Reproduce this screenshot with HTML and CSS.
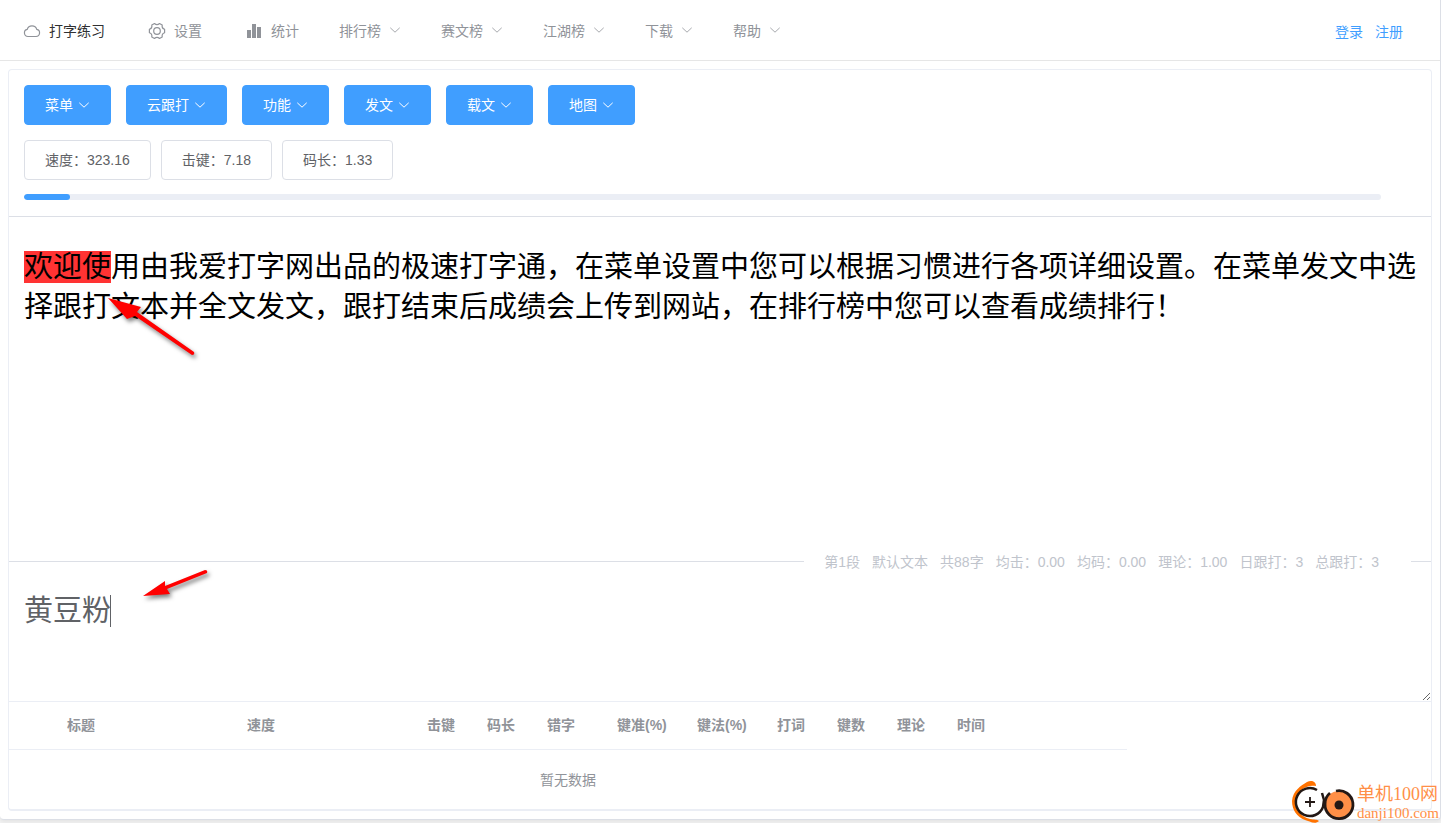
FILE: index.html
```html
<!DOCTYPE html>
<html lang="zh-CN">
<head>
<meta charset="utf-8">
<meta name="viewport" content="width=device-width, initial-scale=1">
<title>打字练习</title>
<link rel="stylesheet" href="styles.css">
</head>
<body>
<svg class="defs" aria-hidden="true">
  <symbol id="chevron" viewBox="0 0 12 12"><path d="M1.3 3.8 6 8.2l4.7-4.4" fill="none" stroke="currentColor"/></symbol>
</svg>
<div class="page">
  <header class="topbar">
    <nav class="nav">
      <a class="nav-item active" href="#">
        <svg class="nav-icon" viewBox="0 0 24 24"><path d="M8 17.500a3.600 3.600 0 0 1-.8-7.100A5 5 0 0 1 16.800 10.400a3.600 3.600 0 0 1-.8 7.100z" fill="none" stroke="currentColor" stroke-width="1.200"/></svg>
        <span>打字练习</span>
      </a>
      <a class="nav-item" href="#">
        <svg class="nav-icon" viewBox="0 0 24 24"><g fill="none" stroke="currentColor" stroke-width="1.200" stroke-linejoin="round"><path d="M9.500 4.500Q12 6.800 14.500 4.500L17.200 6Q16.600 9.300 19.600 10.300V13.700Q16.600 14.700 17.200 18L14.500 19.500Q12 17.200 9.500 19.500L6.800 18Q7.400 14.700 4.400 13.700V10.300Q7.400 9.300 6.800 6Z"/><circle cx="12" cy="12" r="3.300"/></g></svg>
        <span>设置</span>
      </a>
      <a class="nav-item" href="#">
        <svg class="nav-icon" viewBox="0 0 24 24"><path d="M5 11h4v8H5zM10 5h4v14h-4zM15 8h4v11h-4z" fill="currentColor"/></svg>
        <span>统计</span>
      </a>
      <a class="nav-item" href="#"><span>排行榜</span><svg class="nav-arrow"><use href="#chevron"/></svg></a>
      <a class="nav-item" href="#"><span>赛文榜</span><svg class="nav-arrow"><use href="#chevron"/></svg></a>
      <a class="nav-item" href="#"><span>江湖榜</span><svg class="nav-arrow"><use href="#chevron"/></svg></a>
      <a class="nav-item" href="#"><span>下载</span><svg class="nav-arrow"><use href="#chevron"/></svg></a>
      <a class="nav-item" href="#"><span>帮助</span><svg class="nav-arrow"><use href="#chevron"/></svg></a>
    </nav>
    <div class="account"><a href="#">登录</a><a href="#">注册</a></div>
  </header>

  <main class="panel">
    <section class="controls">
      <div class="menus">
        <button class="btn primary" type="button">菜单<svg><use href="#chevron"/></svg></button>
        <button class="btn primary" type="button">云跟打<svg><use href="#chevron"/></svg></button>
        <button class="btn primary" type="button">功能<svg><use href="#chevron"/></svg></button>
        <button class="btn primary" type="button">发文<svg><use href="#chevron"/></svg></button>
        <button class="btn primary" type="button">载文<svg><use href="#chevron"/></svg></button>
        <button class="btn primary" type="button">地图<svg><use href="#chevron"/></svg></button>
      </div>
      <div class="stats">
        <button class="btn" type="button">速度：323.16</button>
        <button class="btn" type="button">击键：7.18</button>
        <button class="btn" type="button">码长：1.33</button>
      </div>
      <div class="progress" role="progressbar" aria-label="进度" aria-valuenow="3" aria-valuemin="0" aria-valuemax="88"><div class="progress-bar" style="width:3.4%"></div></div>
    </section>

    <section class="article">
      <p><mark>欢迎使</mark>用由我爱打字网出品的极速打字通，在菜单设置中您可以根据习惯进行各项详细设置。在菜单发文中选择跟打文本并全文发文，跟打结束后成绩会上传到网站，在排行榜中您可以查看成绩排行！</p>
      <svg class="arrow arrow-text" viewBox="0 0 100 70" aria-hidden="true"><path d="M7 5 40 14l-4 5 57 40q1 3-2 3L34 23l-8 3z"/></svg>
    </section>

    <div class="divider">
      <div class="summary">
        <span>第1段</span><span>默认文本</span><span>共88字</span><span>均击：0.00</span><span>均码：0.00</span><span>理论：1.00</span><span>日跟打：3</span><span>总跟打：3</span>
      </div>
    </div>

    <section class="typing">
      <textarea aria-label="跟打输入" spellcheck="false">黄豆粉</textarea>
      <span class="caret" aria-hidden="true"></span>
      <svg class="arrow arrow-input" viewBox="0 0 80 40" aria-hidden="true"><path d="M4 30 26 15l0 5 40-16q3 0 2 3L28 23l3 5z"/></svg>
    </section>

    <table class="results">
      <colgroup><col class="c48"><col class="c180"><col class="c180"><col class="c60"><col class="c60"><col class="c70"><col class="c80"><col class="c80"><col class="c60"><col class="c60"><col class="c60"><col class="c180"></colgroup>
      <thead><tr><th></th><th>标题</th><th>速度</th><th>击键</th><th>码长</th><th>错字</th><th>键准(%)</th><th>键法(%)</th><th>打词</th><th>键数</th><th>理论</th><th>时间</th></tr></thead>
      <tbody><tr><td colspan="12">暂无数据</td></tr></tbody>
    </table>
  </main>
</div>

<div class="brand">
  <svg viewBox="0 0 66 44" aria-hidden="true">
    <path d="M25 6C15 4 6 11 5 21c0 9 5 16 14 18 4 1 7 0 9 2-4 4-10 0-14-1C6 37 1 30 1 21 2 10 10 6 16 2c4-2 9-1 9 4z" fill="#ff7200"/>
    <circle cx="19" cy="22" r="14" fill="#fff"/>
    <path d="M26 10A14 14 0 1 0 32 27L33 20 31 13" fill="none" stroke="#231815" stroke-width="2.500"/>
    <circle cx="48" cy="25" r="14" fill="#ff8f47"/>
    <path d="M45 11A14 14 0 1 1 34 24Q34 17 39 13" fill="none" stroke="#231815" stroke-width="2.800"/>
    <circle cx="48" cy="25" r="4.500" fill="#231815"/>
    <path d="M19 17v10M14 22h10" stroke="#231815" stroke-width="1.800"/>
  </svg>
  <div class="brand-text"><span class="brand-name">单机100网</span><span class="brand-url">danji100.com</span></div>
</div>
</body>
</html>
```

FILE: styles.css
```css
* { box-sizing: border-box; }
body {
  margin: 0;
  background: #f2f2f2;
  color: #606266;
  font: 14px/20px "Liberation Sans", "Noto Sans CJK SC", sans-serif;
}
a { color: inherit; text-decoration: none; }
.defs { position: absolute; width: 0; height: 0; }
.page {
  background: #fff;
  border: 1px solid #dcdfe6;
  border-width: 0 1px 1px 0;
  border-radius: 0 0 4px 4px;
  padding-bottom: 8px;
  margin-bottom: 3px;
  box-shadow: 0 2px 4px rgba(0, 0, 0, .06);
}
.topbar {
  display: flex;
  justify-content: space-between;
  height: 61px;
  padding-top: 2px;
  border-bottom: 1px solid #e6e6e6;
}
.nav { display: flex; }
.nav-item {
  display: flex;
  align-items: center;
  padding: 0 20px;
  color: #909399;
}
.nav-item.active span { color: #303133; }
.nav-icon { width: 24px; height: 24px; margin-right: 5px; }
.nav-arrow { width: 12px; height: 12px; margin: 0 0 2px 8px; stroke-width: .8; }
.account {
  display: flex;
  align-items: center;
  gap: 12px;
  padding: 2px 37px 0 0;
  color: #409eff;
}
.panel {
  margin: 8px 8px 0;
  border: 1px solid #ebeef5;
  border-bottom-width: 2px;
  border-radius: 4px;
}
.controls { padding: 15px 15px 16px; border-bottom: 1px solid #dcdfe6; }
.menus { display: flex; gap: 15px; }
.stats { display: flex; gap: 10px; margin: 15px 0 14px; }
.btn {
  display: flex;
  align-items: center;
  height: 40px;
  padding: 0 20px;
  border: 1px solid #dcdfe6;
  border-radius: 4px;
  background: #fff;
  color: #606266;
  font: inherit;
}
.btn.primary { background: #409eff; border-color: #409eff; color: #fff; }
.btn svg { width: 12px; height: 12px; margin-left: 5px; }
.progress {
  height: 6px;
  margin-right: 35px;
  border-radius: 3px;
  background: #ebeef5;
  overflow: hidden;
}
.progress-bar { height: 6px; border-radius: 3px; background: #409eff; }
.article {
  position: relative;
  min-height: 334px;
  padding: 30px 8px 30px 15px;
  color: #000;
  font-size: 29px;
  line-height: 40px;
}
.article p { margin: 0; }
mark {
  color: inherit;
  background: linear-gradient(#ff3333, #ff3333) top / 100% 32px no-repeat;
}
.arrow { position: absolute; fill: #f00; filter: drop-shadow(2px 3px 2px rgba(0, 0, 0, .5)); }
.arrow-text { left: 92px; top: 76px; width: 100px; height: 70px; }
.arrow-input { left: 130px; top: -5px; width: 80px; height: 40px; }
.divider { display: flex; align-items: center; height: 20px; }
.divider::before { content: ""; flex: 1; height: 1px; background: #dcdfe6; }
.divider::after { content: ""; width: 20px; height: 1px; background: #dcdfe6; }
.summary { display: flex; gap: 12px; padding: 1px 32px 0 20px; color: #c0c4cc; }
.typing { position: relative; border-bottom: 1px solid #ebeef5; }
.typing textarea {
  display: block;
  width: 100%;
  height: 130px;
  padding: 20px 15px;
  border: 0;
  outline: 0;
  resize: vertical;
  background: transparent;
  color: #606266;
  font: inherit;
  font-size: 29px;
  line-height: 40px;
}
.caret { position: absolute; left: 101px; top: 24px; width: 1px; height: 32px; background: #606266; }
.results {
  width: 1118px;
  table-layout: fixed;
  border-collapse: separate;
  border-spacing: 0;
  color: #909399;
}
.c48 { width: 48px; }
.c60 { width: 60px; }
.c70 { width: 70px; }
.c80 { width: 80px; }
.c180 { width: 180px; }
.results th {
  height: 48px;
  padding: 0 10px 1px;
  border-bottom: 1px solid #ebeef5;
  text-align: left;
  white-space: nowrap;
}
.results td { height: 59px; padding: 0; text-align: center; }
.brand { position: absolute; right: 2px; top: 780px; display: flex; color: #ff8f47; }
.brand svg { width: 66px; height: 44px; }
.brand-text { display: flex; flex-direction: column; padding-top: 2px; font-family: "Liberation Serif", "Noto Sans CJK SC", serif; }
.brand-name { font-size: 18px; line-height: 24px; }
.brand-url { font-size: 15px; line-height: 14px; }
```
